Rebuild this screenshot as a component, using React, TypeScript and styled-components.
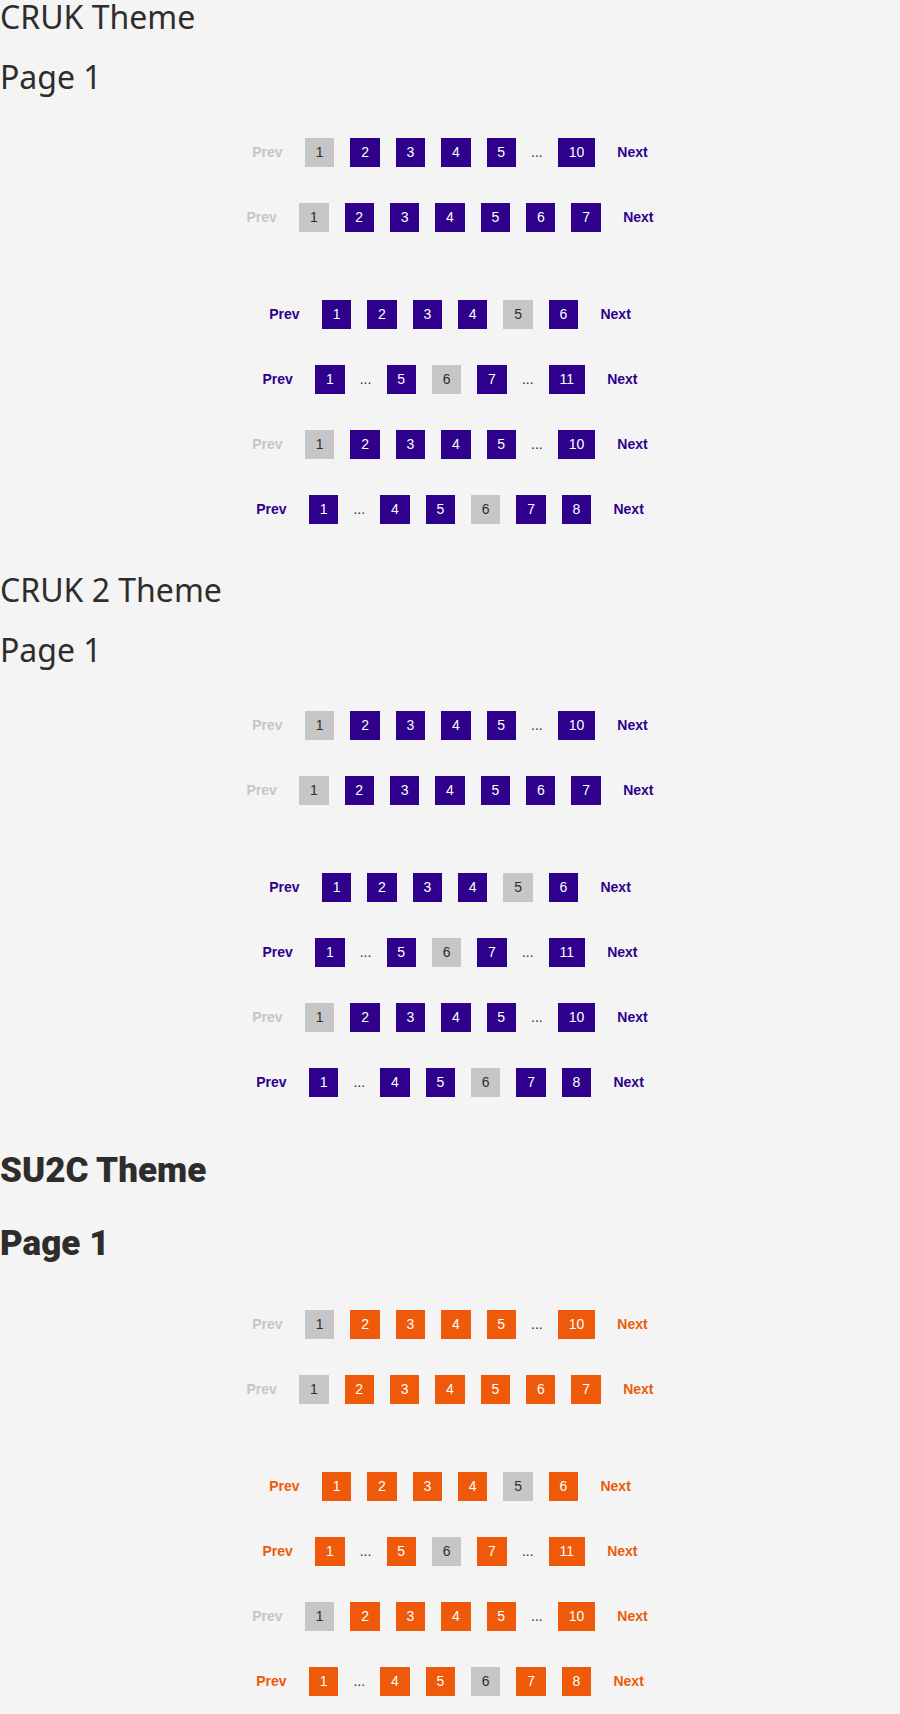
import React from "react";
import styled, { createGlobalStyle, ThemeProvider } from "styled-components";

type Theme = {
  primary: string;
  headingFont: string;
  headingWeight: number;
  headingSize: string;
  headingLine: string;
  headingGap: string;
};

const crukTheme: Theme = {
  primary: "#2e008b",
  headingFont: '"Noto Sans", "Open Sans", sans-serif',
  headingWeight: 400,
  headingSize: "32px",
  headingLine: "34px",
  headingGap: "26px",
};

const su2cTheme: Theme = {
  primary: "#ee5a0a",
  headingFont: 'Roboto, "Noto Sans", sans-serif',
  headingWeight: 900,
  headingSize: "35px",
  headingLine: "50px",
  headingGap: "23px",
};

const GlobalStyle = createGlobalStyle`
  html, body {
    margin: 0;
    padding: 0;
    background: #f4f4f4;
  }
  body {
    font-family: "Liberation Sans", Arial, sans-serif;
    color: #2e2d2c;
  }
`;

const Page = styled.main`
  display: flex;
  flex-direction: column;
  gap: 31px;
`;

const Section = styled.section`
  display: flex;
  flex-direction: column;
`;

const Heading = styled.h2<{ theme: Theme }>`
  margin: 0 0 ${(p) => p.theme.headingGap};
  font-family: ${(p) => p.theme.headingFont};
  font-weight: ${(p) => p.theme.headingWeight};
  font-size: ${(p) => p.theme.headingSize};
  line-height: ${(p) => p.theme.headingLine};
  color: #2e2d2c;
`;

const Group = styled.div`
  display: flex;
  flex-direction: column;
  & + & {
    margin-top: 32px;
  }
`;

const Row = styled.ul`
  list-style: none;
  margin: 0;
  padding: 0;
  height: 65px;
  display: flex;
  align-items: center;
  justify-content: center;
  font-family: "Liberation Sans", Arial, sans-serif;
  font-size: 14px;
`;

const Item = styled.li`
  display: flex;
  margin: 0 8px;
`;

const PageBox = styled.a<{ $active?: boolean; theme: Theme }>`
  display: block;
  height: 29px;
  line-height: 29px;
  padding: 0 10.8px;
  background: ${(p) => (p.$active ? "#c6c6c6" : p.theme.primary)};
  color: ${(p) => (p.$active ? "#2e2d2c" : "#ffffff")};
  text-decoration: none;
  cursor: pointer;
`;

const NavLink = styled.a<{ $disabled?: boolean; theme: Theme }>`
  display: block;
  padding: 0 6.3px;
  line-height: 29px;
  font-weight: 700;
  color: ${(p) => (p.$disabled ? "#c6c6c6" : p.theme.primary)};
  text-decoration: none;
  cursor: ${(p) => (p.$disabled ? "default" : "pointer")};
`;

const Dots = styled.span`
  display: flex;
  justify-content: center;
  width: 10px;
  line-height: 29px;
  color: #2e2d2c;
  white-space: nowrap;
`;

type Entry = number | "...";

type RowDef = {
  prevDisabled: boolean;
  current: number;
  pages: Entry[];
};

const groupA: RowDef[] = [
  { prevDisabled: true, current: 1, pages: [1, 2, 3, 4, 5, "...", 10] },
  { prevDisabled: true, current: 1, pages: [1, 2, 3, 4, 5, 6, 7] },
];

const groupB: RowDef[] = [
  { prevDisabled: false, current: 5, pages: [1, 2, 3, 4, 5, 6] },
  { prevDisabled: false, current: 6, pages: [1, "...", 5, 6, 7, "...", 11] },
  { prevDisabled: true, current: 1, pages: [1, 2, 3, 4, 5, "...", 10] },
  { prevDisabled: false, current: 6, pages: [1, "...", 4, 5, 6, 7, 8] },
];

const Pager: React.FC<{ def: RowDef }> = ({ def }) => (
  <Row>
    <Item>
      <NavLink $disabled={def.prevDisabled}>Prev</NavLink>
    </Item>
    {def.pages.map((p, i) =>
      p === "..." ? (
        <Item key={i}>
          <Dots>...</Dots>
        </Item>
      ) : (
        <Item key={i}>
          <PageBox $active={p === def.current}>{p}</PageBox>
        </Item>
      )
    )}
    <Item>
      <NavLink>Next</NavLink>
    </Item>
  </Row>
);

const ThemeSection: React.FC<{ title: string; theme: Theme }> = ({ title, theme }) => (
  <ThemeProvider theme={theme}>
    <Section>
      <Heading>{title}</Heading>
      <Heading>Page 1</Heading>
      <Group>
        {groupA.map((d, i) => (
          <Pager key={i} def={d} />
        ))}
      </Group>
      <Group>
        {groupB.map((d, i) => (
          <Pager key={i} def={d} />
        ))}
      </Group>
    </Section>
  </ThemeProvider>
);

export default function App() {
  return (
    <>
      <GlobalStyle />
      <Page>
        <ThemeSection title="CRUK Theme" theme={crukTheme} />
        <ThemeSection title="CRUK 2 Theme" theme={crukTheme} />
        <ThemeSection title="SU2C Theme" theme={su2cTheme} />
      </Page>
    </>
  );
}
